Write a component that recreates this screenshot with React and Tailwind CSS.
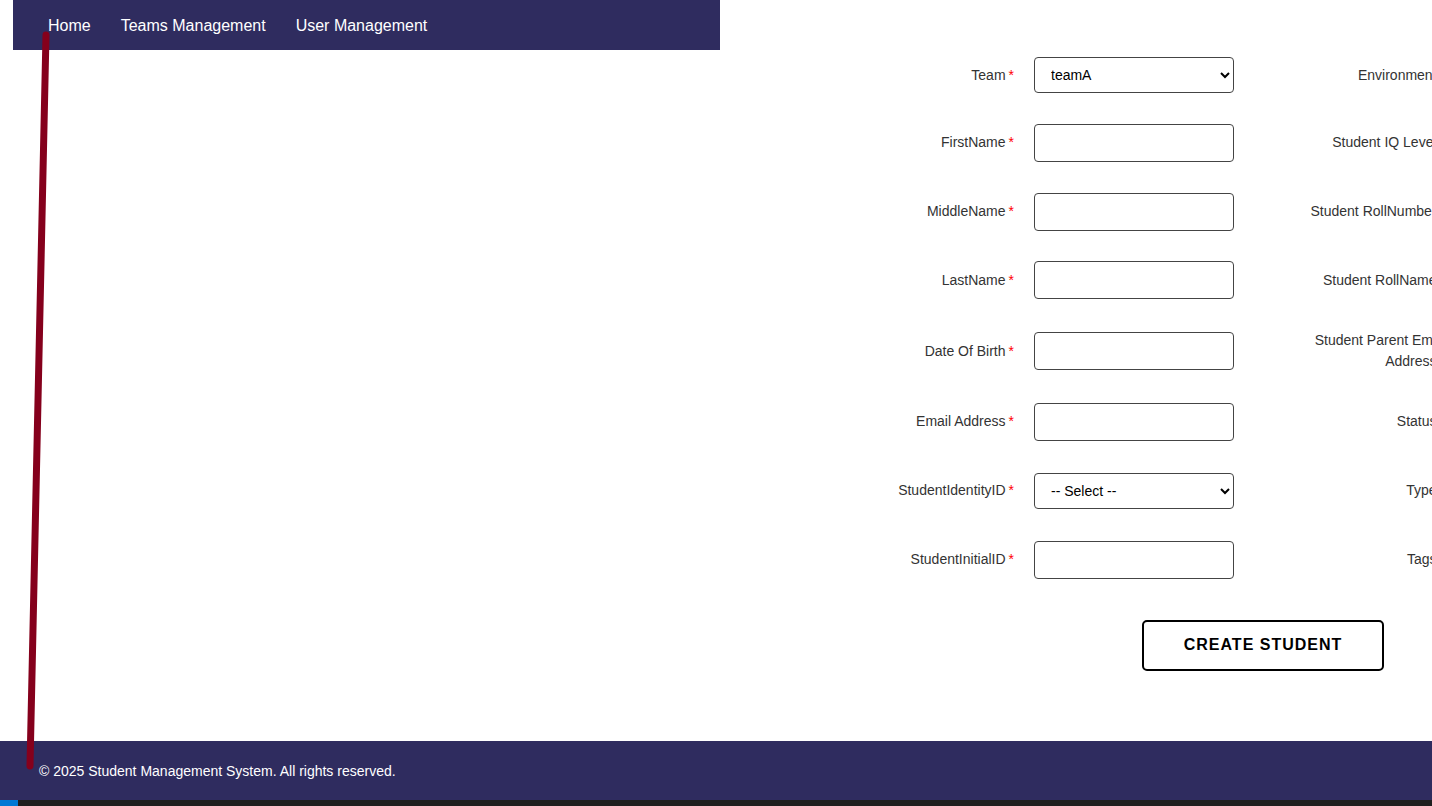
import React from 'react';

const leftFields = [
  { label: 'Team', type: 'select', value: 'teamA', options: ['teamA', 'teamB', 'teamC'] },
  { label: 'FirstName' },
  { label: 'MiddleName' },
  { label: 'LastName' },
  { label: 'Date Of Birth' },
  { label: 'Email Address' },
  { label: 'StudentIdentityID', type: 'select', value: '', options: [] },
  { label: 'StudentInitialID' },
];

const rightFields = [
  { label: 'Environment', type: 'select', value: '', options: [] },
  { label: 'Student IQ Level' },
  { label: 'Student RollNumber' },
  { label: 'Student RollName' },
  { label: 'Student Parent Email Address' },
  { label: 'Status' },
  { label: 'Type' },
  { label: 'Tags' },
];

const Field = ({ label, type, value, options, right }) => (
  <div className="flex items-center gap-[20px]">
    <label className="w-[155px] shrink-0 text-right text-[14px] leading-[21px] text-[#333]">
      {label}
      <span className={right ? 'ml-[5px] text-[#ff0000]' : 'ml-[3px] text-[#ff0000]'}>*</span>
    </label>
    {type === 'select' ? (
      <select
        defaultValue={value}
        className="w-[200px] h-[36px] pl-[12px] pr-[6px] border border-[#444] rounded-[4px] bg-white text-[14px] text-black"
      >
        {value === '' && <option value="">-- Select --</option>}
        {options.map((o) => (
          <option key={o} value={o}>{o}</option>
        ))}
      </select>
    ) : (
      <input type="text" className="w-[200px] h-[38px] px-[10px] border border-[#444] rounded-[4px] bg-white text-[14px]" />
    )}
  </div>
);

export default function App() {
  return (
    <div className="relative w-[1432px] h-[806px] overflow-hidden bg-white flex flex-col font-['Liberation_Sans',Arial,sans-serif]">
      {/* Navbar */}
      <nav className="ml-[13px] w-[707px] h-[50px] shrink-0 bg-[#2f2c5f] flex items-center pt-[1px] pl-[35px] gap-[30px] text-white text-[16px]">
        <a href="#">Home</a>
        <a href="#">Teams Management</a>
        <a href="#">User Management</a>
      </nav>

      {/* Form */}
      <main className="flex-1">
        <div className="ml-[859px] w-[808px] pt-[7px] flex flex-col items-center">
          <div className="grid grid-cols-2 gap-x-[58px] gap-y-[30.8px] items-center w-full">
            {leftFields.map((f, i) => (
              <React.Fragment key={f.label}>
                <Field {...f} />
                <Field {...rightFields[i]} right />
              </React.Fragment>
            ))}
          </div>
          <button className="mt-[41px] w-[242px] h-[51px] border-2 border-black rounded-[5px] bg-white text-black text-[16px] font-bold tracking-[1px]">
            CREATE STUDENT
          </button>
        </div>
      </main>

      {/* Footer */}
      <footer className="h-[59px] shrink-0 bg-[#2f2c5f] flex items-center pt-[1px] pl-[39px] text-white text-[14px]">
        © 2025 Student Management System. All rights reserved.
      </footer>
      <div className="h-[6px] shrink-0 bg-[#1f1f1f] flex">
        <div className="w-[18px] bg-[#0078d4]" />
      </div>

      {/* annotation stroke */}
      <svg className="absolute inset-0 pointer-events-none" width="1432" height="806">
        <line x1="46" y1="35" x2="30" y2="766" stroke="#85001c" strokeWidth="7" strokeLinecap="round" />
      </svg>
    </div>
  );
}
